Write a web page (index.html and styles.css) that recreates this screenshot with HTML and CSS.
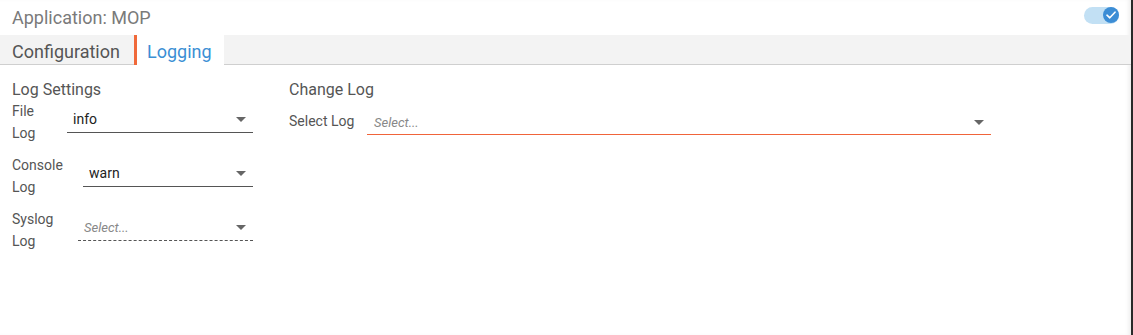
FILE: index.html
```html
<!DOCTYPE html>
<html>
<head>
<meta charset="utf-8">
<link rel="stylesheet" href="styles.css">
</head>
<body>
<div class="app">
  <div class="header">
    <div class="title">Application: MOP</div>
    <div class="toggle"><span class="knob"><svg width="10" height="8" viewBox="0 0 10 8"><path d="M1 4.2 L3.8 6.8 L9 1.2" fill="none" stroke="#fff" stroke-width="1.6" stroke-linecap="round" stroke-linejoin="round"/></svg></span></div>
  </div>
  <div class="tabs">
    <div class="tab">Configuration</div>
    <div class="tab active">Logging</div>
  </div>
  <div class="content">
    <div class="col left">
      <div class="section-title">Log Settings</div>
      <div class="row">
        <div class="label w-file"><span class="label-text">File Log</span></div>
        <div class="select"><span class="value">info</span><span class="arrow"></span></div>
      </div>
      <div class="row">
        <div class="label w-console"><span class="label-text">Console Log</span></div>
        <div class="select"><span class="value">warn</span><span class="arrow"></span></div>
      </div>
      <div class="row">
        <div class="label w-syslog"><span class="label-text">Syslog Log</span></div>
        <div class="select dashed"><span class="placeholder">Select...</span><span class="arrow"></span></div>
      </div>
    </div>
    <div class="col right">
      <div class="section-title">Change Log</div>
      <div class="row single">
        <div class="label w-select">Select Log</div>
        <div class="select focus"><span class="placeholder">Select...</span><span class="arrow"></span></div>
      </div>
    </div>
  </div>
</div>
</body>
</html>
```
FILE: styles.css
```css
html, body {
  margin: 0;
  padding: 0;
  background: #fff;
  font-family: Roboto, "Liberation Sans", Arial, sans-serif;
}
.app {
  width: 1131px;
  height: 335px;
  border-right: 2px solid #2a2a2a;
  box-shadow: inset -4px 0 4px -2px rgba(0,0,0,0.08);
  box-sizing: content-box;
}
.header {
  height: 35px;
  display: flex;
  align-items: center;
  justify-content: space-between;
  padding: 0 12px;
}
.title {
  font-size: 18px;
  color: #7a7a7a;
  font-weight: 400;
}
.toggle {
  width: 35px;
  height: 17px;
  border-radius: 9px;
  background: #c2e0f4;
  display: flex;
  justify-content: flex-end;
  align-items: center;
  margin-top: -5px;
}
.knob {
  width: 16px;
  height: 16px;
  border-radius: 50%;
  background: #3c8dd5;
  display: flex;
  align-items: center;
  justify-content: center;
}
.tabs {
  height: 29px;
  background: #f3f3f3;
  border-bottom: 1px solid #cfcfcf;
  display: flex;
}
.tab {
  font-size: 18px;
  color: #555;
  padding: 3px 14px 0 12px;
  box-sizing: border-box;
  display: flex;
  align-items: center;
  height: 29px;
}
.tab.active {
  background: #fff;
  color: #3b8fd4;
  border-left: 3px solid #f0693a;
  padding: 3px 12px 0 10px;
  height: 30px;
  margin-bottom: -1px;
}
.content {
  display: flex;
  padding: 15px 12px 0 12px;
  gap: 36px;
}
.col.left { width: 241px; }
.col.right { width: 702px; }
.section-title {
  font-size: 16px;
  color: #555;
  line-height: 20px;
}
.row {
  display: flex;
  align-items: center;
  margin-bottom: 10px;
}
.label {
  font-size: 14px;
  color: #555;
  line-height: 22px;
  flex: none;
}
.label-text {
  display: block;
  width: min-content;
}
.w-file { width: 55px; }
.w-console { width: 71px; }
.w-syslog { width: 66px; }
.w-select { width: 78px; }
.row.single { margin-top: 10px; }
.row.single .label { align-self: flex-start; }
.select {
  flex: 1;
  height: 25px;
  border-bottom: 1px solid #555;
  display: flex;
  align-items: center;
  justify-content: space-between;
  padding: 0 7px 0 6px;
  margin-top: -5px;
  font-size: 14px;
  color: #222;
}
.select.dashed { border-bottom: 1px dashed #555; }
.select.focus {
  border-bottom: 1px solid #f0643a;
  height: 24px;
  margin-top: 0;
  padding-left: 7px;
}
.placeholder {
  font-style: italic;
  color: #888;
  font-size: 13px;
}
.arrow {
  width: 0;
  height: 0;
  border-left: 5px solid transparent;
  border-right: 5px solid transparent;
  border-top: 5px solid #666;
}
```
